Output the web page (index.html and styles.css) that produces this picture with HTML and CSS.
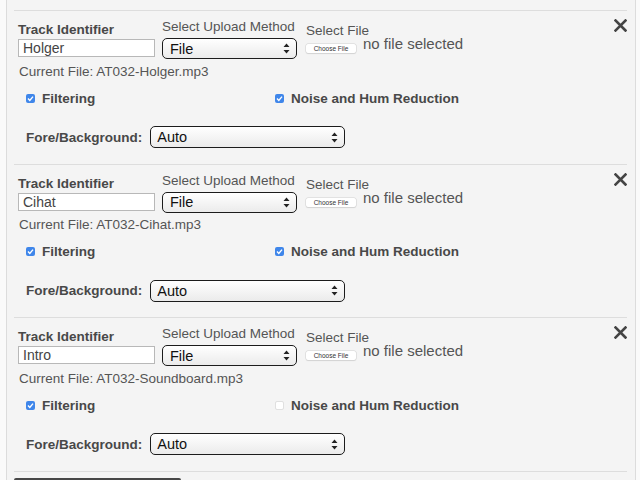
FILE: index.html
```html
<!DOCTYPE html>
<html>
<head>
<meta charset="utf-8">
<link rel="stylesheet" href="styles.css">
</head>
<body>
<div class="panel">
  <div class="tracks">
    <div class="track">
      <div class="row-top">
        <div class="col col-id">
          <label class="label-bold">Track Identifier</label>
          <input class="text-input" type="text" value="Holger">
        </div>
        <div class="col col-method">
          <label class="label">Select Upload Method</label>
          <div class="select select-method">
            <select><option>File</option></select>
            <svg class="arrows" width="7" height="11" viewBox="0 0 7 11"><path d="M3.5 0.5 L6.5 4 L0.5 4 Z M3.5 10.5 L6.5 7 L0.5 7 Z" fill="#222"/></svg>
          </div>
        </div>
        <div class="col col-file">
          <label class="label">Select File</label>
          <div class="file-row">
            <button class="choose-btn" type="button">Choose File</button>
            <span class="file-status">no file selected</span>
          </div>
        </div>
        <button class="close" type="button" aria-label="Remove">
          <svg width="13" height="13" viewBox="0 0 13 13"><path d="M1.5 1.5 L11.5 11.5 M11.5 1.5 L1.5 11.5" stroke="#444" stroke-width="2.6" stroke-linecap="square"/></svg>
        </button>
      </div>
      <div class="current">Current File: AT032-Holger.mp3</div>
      <div class="checks">
        <div class="check"><span class="box on"><svg width="9" height="9" viewBox="0 0 9 9"><path d="M2 4.6 L3.8 6.4 L7 2.6" stroke="#fff" stroke-width="1.4" fill="none"/></svg></span><span class="label-bold">Filtering</span></div>
        <div class="check"><span class="box on"><svg width="9" height="9" viewBox="0 0 9 9"><path d="M2 4.6 L3.8 6.4 L7 2.6" stroke="#fff" stroke-width="1.4" fill="none"/></svg></span><span class="label-bold">Noise and Hum Reduction</span></div>
      </div>
      <div class="fore">
        <span class="label-bold">Fore/Background:</span>
        <div class="select select-fore">
          <select><option>Auto</option></select>
          <svg class="arrows" width="7" height="11" viewBox="0 0 7 11"><path d="M3.5 0.5 L6.5 4 L0.5 4 Z M3.5 10.5 L6.5 7 L0.5 7 Z" fill="#222"/></svg>
        </div>
      </div>
    </div>

    <div class="track">
      <div class="row-top">
        <div class="col col-id">
          <label class="label-bold">Track Identifier</label>
          <input class="text-input" type="text" value="Cihat">
        </div>
        <div class="col col-method">
          <label class="label">Select Upload Method</label>
          <div class="select select-method">
            <select><option>File</option></select>
            <svg class="arrows" width="7" height="11" viewBox="0 0 7 11"><path d="M3.5 0.5 L6.5 4 L0.5 4 Z M3.5 10.5 L6.5 7 L0.5 7 Z" fill="#222"/></svg>
          </div>
        </div>
        <div class="col col-file">
          <label class="label">Select File</label>
          <div class="file-row">
            <button class="choose-btn" type="button">Choose File</button>
            <span class="file-status">no file selected</span>
          </div>
        </div>
        <button class="close" type="button" aria-label="Remove">
          <svg width="13" height="13" viewBox="0 0 13 13"><path d="M1.5 1.5 L11.5 11.5 M11.5 1.5 L1.5 11.5" stroke="#444" stroke-width="2.6" stroke-linecap="square"/></svg>
        </button>
      </div>
      <div class="current">Current File: AT032-Cihat.mp3</div>
      <div class="checks">
        <div class="check"><span class="box on"><svg width="9" height="9" viewBox="0 0 9 9"><path d="M2 4.6 L3.8 6.4 L7 2.6" stroke="#fff" stroke-width="1.4" fill="none"/></svg></span><span class="label-bold">Filtering</span></div>
        <div class="check"><span class="box on"><svg width="9" height="9" viewBox="0 0 9 9"><path d="M2 4.6 L3.8 6.4 L7 2.6" stroke="#fff" stroke-width="1.4" fill="none"/></svg></span><span class="label-bold">Noise and Hum Reduction</span></div>
      </div>
      <div class="fore">
        <span class="label-bold">Fore/Background:</span>
        <div class="select select-fore">
          <select><option>Auto</option></select>
          <svg class="arrows" width="7" height="11" viewBox="0 0 7 11"><path d="M3.5 0.5 L6.5 4 L0.5 4 Z M3.5 10.5 L6.5 7 L0.5 7 Z" fill="#222"/></svg>
        </div>
      </div>
    </div>

    <div class="track">
      <div class="row-top">
        <div class="col col-id">
          <label class="label-bold">Track Identifier</label>
          <input class="text-input" type="text" value="Intro">
        </div>
        <div class="col col-method">
          <label class="label">Select Upload Method</label>
          <div class="select select-method">
            <select><option>File</option></select>
            <svg class="arrows" width="7" height="11" viewBox="0 0 7 11"><path d="M3.5 0.5 L6.5 4 L0.5 4 Z M3.5 10.5 L6.5 7 L0.5 7 Z" fill="#222"/></svg>
          </div>
        </div>
        <div class="col col-file">
          <label class="label">Select File</label>
          <div class="file-row">
            <button class="choose-btn" type="button">Choose File</button>
            <span class="file-status">no file selected</span>
          </div>
        </div>
        <button class="close" type="button" aria-label="Remove">
          <svg width="13" height="13" viewBox="0 0 13 13"><path d="M1.5 1.5 L11.5 11.5 M11.5 1.5 L1.5 11.5" stroke="#444" stroke-width="2.6" stroke-linecap="square"/></svg>
        </button>
      </div>
      <div class="current">Current File: AT032-Soundboard.mp3</div>
      <div class="checks">
        <div class="check"><span class="box on"><svg width="9" height="9" viewBox="0 0 9 9"><path d="M2 4.6 L3.8 6.4 L7 2.6" stroke="#fff" stroke-width="1.4" fill="none"/></svg></span><span class="label-bold">Filtering</span></div>
        <div class="check"><span class="box off"></span><span class="label-bold">Noise and Hum Reduction</span></div>
      </div>
      <div class="fore">
        <span class="label-bold">Fore/Background:</span>
        <div class="select select-fore">
          <select><option>Auto</option></select>
          <svg class="arrows" width="7" height="11" viewBox="0 0 7 11"><path d="M3.5 0.5 L6.5 4 L0.5 4 Z M3.5 10.5 L6.5 7 L0.5 7 Z" fill="#222"/></svg>
        </div>
      </div>
    </div>
  </div>
  <button class="add-btn" type="button" aria-label="Add Track"></button>
</div>
</body>
</html>
```

FILE: styles.css
```css
html, body {
  margin: 0;
  padding: 0;
  background: #fafafa;
  font-family: "Liberation Sans", Arial, sans-serif;
  font-size: 13.5px;
  color: #555;
}

.panel {
  margin-left: 6px;
  width: 630px;
  min-height: 480px;
  box-sizing: border-box;
  border-left: 1px solid #dcdcdc;
  border-right: 1px solid #dcdcdc;
  background: #f4f4f4;
  padding: 10px 8px 0 7px;
}

.tracks {
  border-bottom: 1px solid #dddddd;
}

.track {
  border-top: 1px solid #dddddd;
  padding: 8px 0 15.5px 4px;
}

.label-bold {
  font-weight: bold;
  color: #484848;
  line-height: 15px;
}

.label {
  color: #555;
  line-height: 15px;
}

.row-top {
  display: flex;
  align-items: flex-start;
}

.col {
  display: flex;
  flex-direction: column;
}

.col-id {
  width: 137px;
  margin-right: 7px;
  padding-top: 3px;
}

.text-input {
  margin-top: 2px;
  width: 137px;
  height: 18px;
  box-sizing: border-box;
  border: 1px solid #b8b8b8;
  background: #fff;
  padding: 0 4px;
  font-family: "Liberation Sans", Arial, sans-serif;
  font-size: 14px;
  color: #444;
  outline: none;
}

.col-method {
  width: 135px;
  margin-right: 9px;
}

.select {
  position: relative;
}

.select select {
  appearance: none;
  -webkit-appearance: none;
  width: 100%;
  height: 100%;
  box-sizing: border-box;
  border: 1.5px solid #1c1c1c;
  border-radius: 5px;
  background: linear-gradient(#ffffff, #ebebeb);
  font-family: "Liberation Sans", Arial, sans-serif;
  font-size: 14.5px;
  color: #111;
  outline: none;
  margin: 0;
}

.select .arrows {
  position: absolute;
  right: 7px;
  top: 50%;
  margin-top: -5.5px;
  pointer-events: none;
}

.select-method {
  margin-top: 4px;
  width: 135px;
  height: 21px;
}

.select-method select {
  padding: 0 0 0 7px;
}

.col-file {
  padding-top: 5px;
}

.col-file .label {
  line-height: 13px;
}

.file-row {
  display: flex;
  align-items: flex-start;
  line-height: 12px;
  padding-top: 1px;
}

.choose-btn {
  margin-top: 6px;
  width: 50px;
  height: 9px;
  padding: 0;
  border: none;
  border-radius: 2px;
  background: #fff;
  box-shadow: 0 0 0 0.5px #d0d0d0, 0 1px 1px rgba(0,0,0,0.12);
  font-family: "Liberation Sans", Arial, sans-serif;
  font-size: 6.5px;
  line-height: 9px;
  color: #333;
}

.file-status {
  margin-left: 7px;
  font-size: 15px;
  color: #555;
}

.close {
  margin-left: auto;
  padding: 0;
  border: none;
  background: none;
  width: 13px;
  height: 13px;
  display: flex;
}

.current {
  margin-top: 4.5px;
  line-height: 15px;
  color: #555;
  padding-left: 1px;
}

.checks {
  margin-top: 12px;
  display: grid;
  grid-template-columns: 249px auto;
  padding-left: 8px;
}

.check {
  display: flex;
  align-items: center;
  gap: 7px;
}

.box {
  width: 9px;
  height: 9px;
  box-sizing: border-box;
  border-radius: 2px;
  display: flex;
}

.box.on {
  background: #3f86ea;
}

.box.off {
  background: #fff;
  border: 1px solid #e0e0e0;
}

.fore {
  margin-top: 20.5px;
  display: flex;
  align-items: center;
  padding-left: 8px;
}

.select-fore {
  margin-left: 8px;
  width: 195px;
  height: 22px;
}

.select-fore select {
  padding: 0 0 0 6px;
}

.add-btn {
  display: block;
  margin-top: 6px;
  width: 167px;
  height: 34px;
  border: none;
  border-radius: 2px;
  background: #474747;
}
```
